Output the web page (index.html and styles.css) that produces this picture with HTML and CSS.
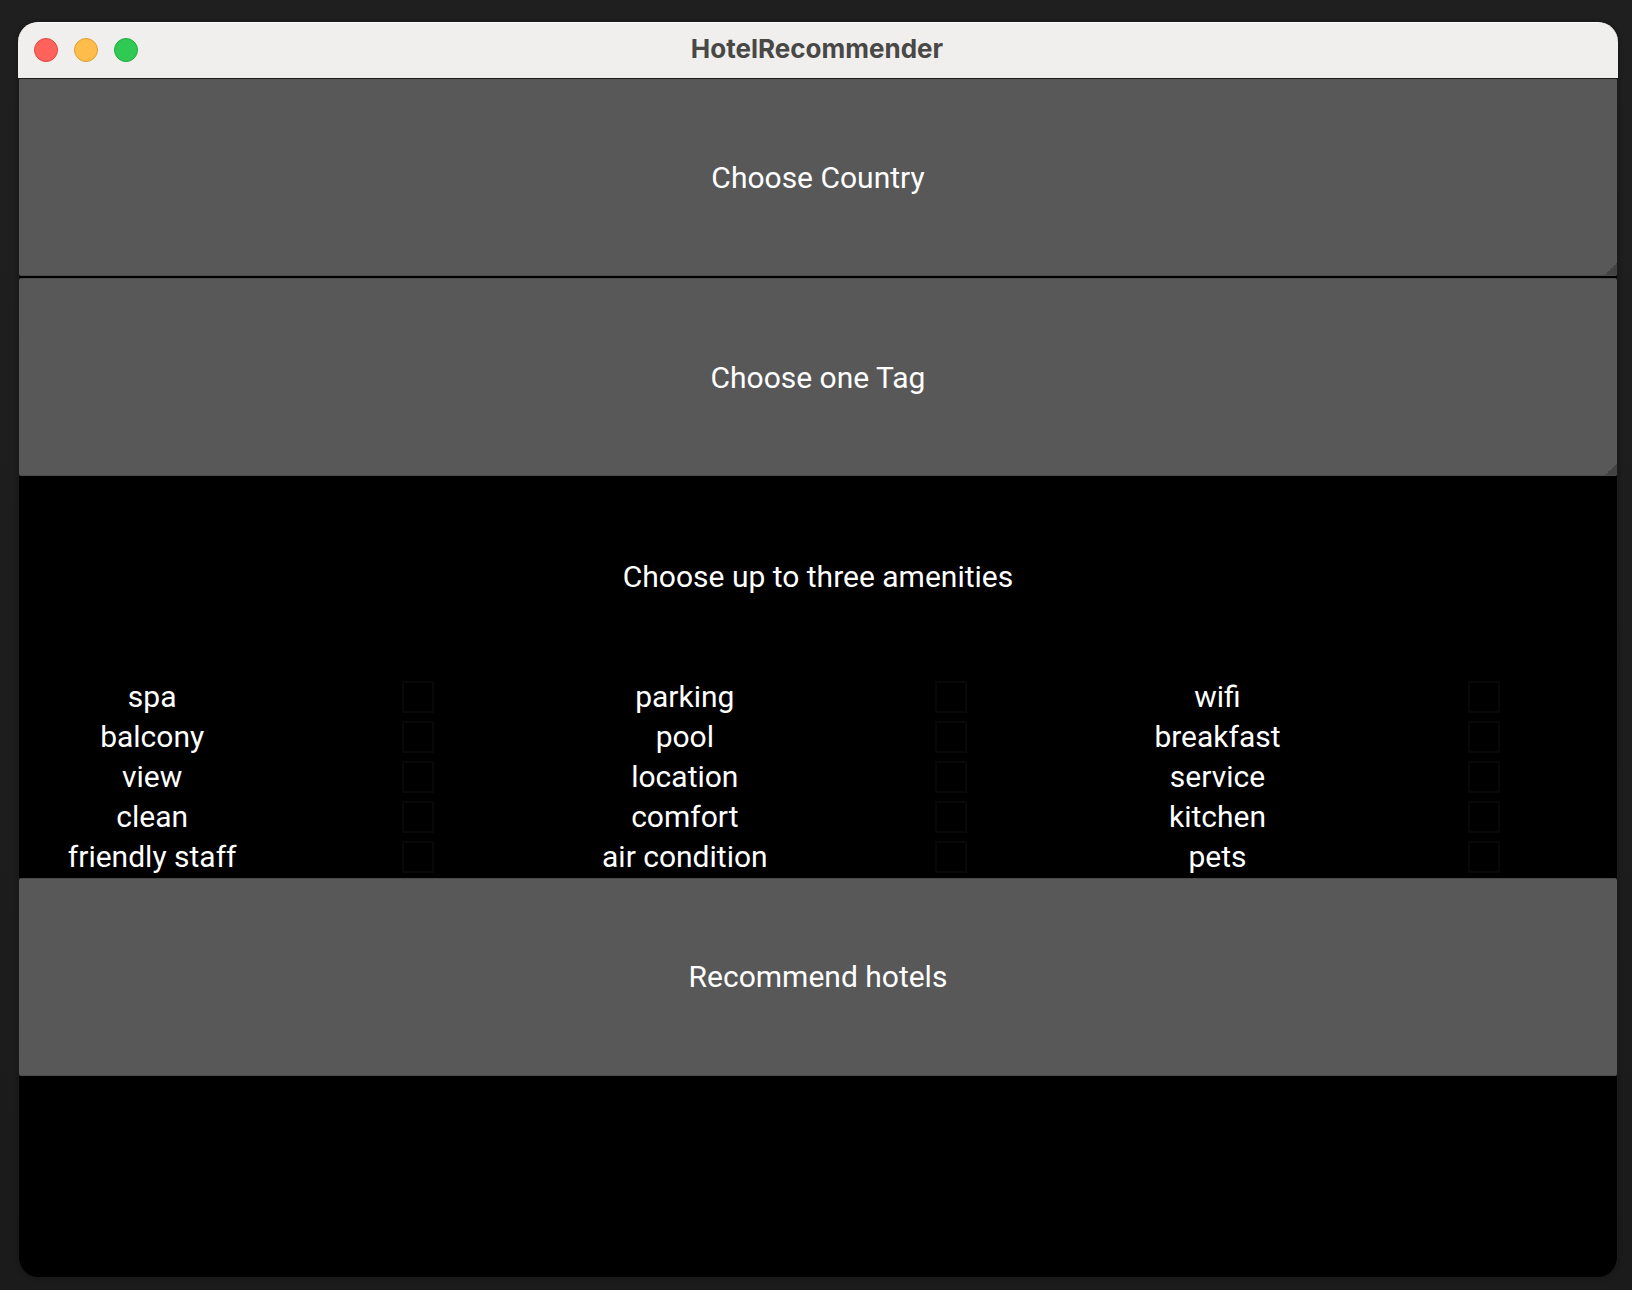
FILE: index.html
```html
<!DOCTYPE html>
<html lang="en">
<head>
<meta charset="utf-8">
<meta name="viewport" content="width=device-width, initial-scale=1">
<title>HotelRecommender</title>
<link rel="stylesheet" href="styles.css">
</head>
<body>
<div class="window">
  <header class="titlebar">
    <div class="controls">
      <button class="dot dot-close" type="button" aria-label="Close"></button>
      <button class="dot dot-minimize" type="button" aria-label="Minimize"></button>
      <button class="dot dot-zoom" type="button" aria-label="Zoom"></button>
    </div>
    <h1 class="title">HotelRecommender</h1>
  </header>
  <form class="content">
    <div class="row">
      <select class="tile spinner" aria-label="Country"><option>Choose Country</option></select>
    </div>
    <div class="row">
      <select class="tile spinner" aria-label="Tag"><option>Choose one Tag</option></select>
    </div>
    <h2 class="row prompt" id="prompt">Choose up to three amenities</h2>
    <div class="row amenities" role="group" aria-labelledby="prompt">
      <label for="spa">spa</label><input class="check" type="checkbox" id="spa">
      <label for="parking">parking</label><input class="check" type="checkbox" id="parking">
      <label for="wifi">wifi</label><input class="check" type="checkbox" id="wifi">
      <label for="balcony">balcony</label><input class="check" type="checkbox" id="balcony">
      <label for="pool">pool</label><input class="check" type="checkbox" id="pool">
      <label for="breakfast">breakfast</label><input class="check" type="checkbox" id="breakfast">
      <label for="view">view</label><input class="check" type="checkbox" id="view">
      <label for="location">location</label><input class="check" type="checkbox" id="location">
      <label for="service">service</label><input class="check" type="checkbox" id="service">
      <label for="clean">clean</label><input class="check" type="checkbox" id="clean">
      <label for="comfort">comfort</label><input class="check" type="checkbox" id="comfort">
      <label for="kitchen">kitchen</label><input class="check" type="checkbox" id="kitchen">
      <label for="staff">friendly staff</label><input class="check" type="checkbox" id="staff">
      <label for="air">air condition</label><input class="check" type="checkbox" id="air">
      <label for="pets">pets</label><input class="check" type="checkbox" id="pets">
    </div>
    <div class="row">
      <button class="tile" type="button">Recommend hotels</button>
    </div>
    <div class="row"></div>
  </form>
</div>
</body>
</html>
```
FILE: styles.css
```css
* {
  box-sizing: border-box;
}

body {
  margin: 0;
  min-height: 100vh;
  padding: 22px 14px 13px 18px;
  display: flex;
  background: linear-gradient(#1f1f1f, #1b1b1b);
  font-family: Roboto, "Liberation Sans", sans-serif;
  font-size: 30px;
  line-height: 36px;
  color: #fff;
}

.window {
  flex: 1;
  display: flex;
  flex-direction: column;
  border-radius: 20px;
  box-shadow: 0 0 4px #151515;
}

.titlebar {
  position: relative;
  z-index: 1;
  height: 57px;
  margin-bottom: -2px;
  padding: 0 16px 2px;
  display: grid;
  grid-template-columns: 1fr auto 1fr;
  align-items: center;
  background: #f0efed;
  border-top: 1px solid #fbfbfa;
  border-bottom: 1px solid #1c1c1c;
  border-radius: 20px 20px 0 0;
}

.controls {
  display: flex;
  gap: 16px;
}

.dot {
  width: 24px;
  height: 24px;
  padding: 0;
  border: 1px solid;
  border-radius: 50%;
}

.dot-close {
  background: #ff625b;
  border-color: #e2463f;
}

.dot-minimize {
  background: #febc4b;
  border-color: #dfa033;
}

.dot-zoom {
  background: #2fc953;
  border-color: #1fad3a;
}

.title {
  margin: 0;
  padding: 0 2px 2px 0;
  font: 700 26px/32px Inter, "Liberation Sans", sans-serif;
  font-optical-sizing: none;
  color: #484846;
}

.content {
  flex: 1;
  display: grid;
  grid-template-rows: repeat(6, 1fr);
  background: #000;
  border: solid #1c1c1c;
  border-width: 0 1px;
  border-radius: 0 0 20px 20px;
}

.row {
  min-height: 200px;
  padding: 1px 0;
}

.tile {
  display: block;
  width: 100%;
  height: 100%;
  padding: 0;
  appearance: none;
  background: #585858;
  border: solid #4b4b4b;
  border-width: 1px 0;
  border-radius: 2px;
  font: inherit;
  color: #fff;
  text-align: center;
}

.spinner {
  padding-top: 2px;
  text-align-last: center;
  background: linear-gradient(135deg, transparent 50%, #434343 50%) right bottom / 12px 12px no-repeat #585858;
}

.prompt {
  margin: 0;
  display: grid;
  place-items: center;
  font: inherit;
}

.amenities {
  padding: 0;
  display: grid;
  grid-template-columns: repeat(6, 1fr);
  grid-template-rows: repeat(5, 1fr);
  place-items: center;
}

.check {
  width: 32px;
  height: 32px;
  margin: 0;
  appearance: none;
  border: 2px solid #080808;
}

.check:checked {
  background: #585858;
}
```
